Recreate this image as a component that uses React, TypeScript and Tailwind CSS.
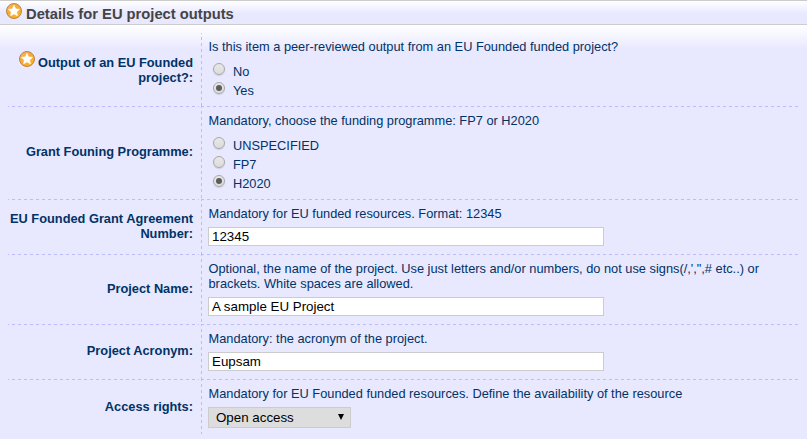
import type { ReactNode } from 'react';

function Star({ className = '' }: { className?: string }) {
  return (
    <svg viewBox="0 0 16 16" className={`h-4 w-4 ${className}`}>
      <defs>
        <linearGradient id="gold" x1="0" y1="0" x2="1" y2="1">
          <stop offset="0" stopColor="#f7b75c" />
          <stop offset="0.5" stopColor="#f5a92f" />
          <stop offset="1" stopColor="#fbbd1c" />
        </linearGradient>
        <linearGradient id="rim" x1="0" y1="0" x2="0" y2="1">
          <stop offset="0" stopColor="#b47a50" />
          <stop offset="1" stopColor="#b87832" />
        </linearGradient>
      </defs>
      <circle cx="8" cy="8" r="7.5" fill="url(#gold)" stroke="url(#rim)" strokeWidth="0.9" />
      <path d="M8 2.1 9.7 5.8 13.7 6.3 10.8 9.1 11.6 13 8 11.1 4.4 13 5.2 9.1 2.3 6.3 6.3 5.8Z" fill="#fff" stroke="#fff" strokeWidth="0.4" />
    </svg>
  );
}

function Radio({ label, checked = false }: { label: string; checked?: boolean }) {
  return (
    <label className="flex h-[19px] items-start pl-[5px]">
      <span className="mt-px flex h-3 w-3 shrink-0 items-center justify-center rounded-full border border-[#a8a8a8] bg-linear-to-b from-[#e8e8e8] to-[#dcdcdc] shadow-[0_1px_1px_rgba(0,0,0,0.12)]">
        {checked && <span className="h-1.5 w-1.5 rounded-full bg-[#5c5c5c]" />}
      </span>
      <span className="ml-2 pt-[2px]">{label}</span>
    </label>
  );
}

function TextBox({ value }: { value: string }) {
  return (
    <input
      readOnly
      value={value}
      className="mt-1.5 block h-[19px] w-[396px] border border-[#cccccc] bg-white px-[3px] text-[13.333px] leading-[15px] text-black"
    />
  );
}

type RowProps = {
  label: ReactNode;
  help: ReactNode;
  height: string;
  labelPad?: string;
  last?: boolean;
  children: ReactNode;
};

const dashLeft = 'bg-[repeating-linear-gradient(90deg,#bbbbff_0_1px,transparent_1px_4px,#bbbbff_4px_6px)]';
const dashRight = 'bg-[repeating-linear-gradient(90deg,#bbbbff_0_3px,transparent_3px_6px)]';
const dashDown = 'bg-[repeating-linear-gradient(180deg,#bbbbff_0_1px,transparent_1px_4px,#bbbbff_4px_6px)]';

function Row({ label, help, height, labelPad = 'pb-[3px]', last = false, children }: RowProps) {
  return (
    <div className="flex flex-col">
      <div className={`flex ${height}`}>
        <div className={`flex w-[193px] items-center justify-end pr-2 text-right font-bold whitespace-nowrap ${labelPad}`}>
          <div>{label}</div>
        </div>
        <div className={`w-px ${dashDown}`} />
        <div className="flex-1 pt-1.5 pl-1.5">
          <p className="pl-[0.5px] whitespace-nowrap">{help}</p>
          {children}
        </div>
      </div>
      {!last && (
        <div className="flex h-px">
          <div className={`mr-0.5 w-[191px] ${dashLeft}`} />
          <div className={`w-[597px] ${dashRight}`} />
        </div>
      )}
    </div>
  );
}

export default function App() {
  return (
    <div className="h-[439px] w-[807px] overflow-hidden bg-[#e8e8ff] font-['Liberation_Sans',Arial,sans-serif] text-[12.8px] leading-[15px] text-[#003366]">
      <header className="flex h-[25px] items-start border-y border-[#cccccc] bg-linear-to-b from-white to-[#e8e8ff] to-[13px] pl-1.5">
        <Star className="mt-[2px]" />
        <h2 className="ml-1 pt-[5px] text-[14.72px] leading-[17px] font-bold whitespace-nowrap text-[#444444]">
          Details for EU project outputs
        </h2>
      </header>
      <main className="h-[414px] bg-linear-to-b from-white to-[#e8e8ff] to-[25px] pt-2 pl-2">
        <Row
          height="h-[73px]"
          labelPad="pb-0"
          label={
            <>
              <Star className="mr-[3px] -mt-1 mb-0 inline-block align-[0px]" />
              Output of an EU Founded
              <br />
              project?:
            </>
          }
          help="Is this item a peer-reviewed output from an EU Founded funded project?"
        >
          <div className="mt-2">
            <Radio label="No" />
            <Radio label="Yes" checked />
          </div>
        </Row>
        <Row
          height="h-[92px]"
          label="Grant Founing Programme:"
          help="Mandatory, choose the funding programme: FP7 or H2020"
        >
          <div className="mt-2">
            <Radio label="UNSPECIFIED" />
            <Radio label="FP7" />
            <Radio label="H2020" checked />
          </div>
        </Row>
        <Row
          height="h-[54px]"
          labelPad="pb-[2px]"
          label={
            <>
              EU Founded Grant Agreement
              <br />
              Number:
            </>
          }
          help="Mandatory for EU funded resources. Format: 12345"
        >
          <TextBox value="12345" />
        </Row>
        <Row
          height="h-[69px]"
          labelPad="pb-[2px]"
          label="Project Name:"
          help={
            <>
              {'Optional, the name of the project. Use just letters and/or numbers, do not use signs(/,\',",# etc..) or'}
              <br />
              brackets. White spaces are allowed.
            </>
          }
        >
          <TextBox value="A sample EU Project" />
        </Row>
        <Row height="h-[54px]" label="Project Acronym:" help="Mandatory: the acronym of the project.">
          <TextBox value="Eupsam" />
        </Row>
        <Row
          height="h-[54px]"
          labelPad="pb-px"
          last
          label="Access rights:"
          help="Mandatory for EU Founded funded resources. Define the availability of the resource"
        >
          <button className="mt-1.5 flex h-[21px] w-[143px] items-center justify-between border border-[#cccccc] bg-[#dddddd] pr-1.5 pl-[7px] text-[13.333px] text-black">
            Open access
            <svg viewBox="0 0 6 6" className="mb-px h-1.5 w-1.5">
              <path d="M0 0H6L3 6Z" fill="#000" />
            </svg>
          </button>
        </Row>
      </main>
    </div>
  );
}
